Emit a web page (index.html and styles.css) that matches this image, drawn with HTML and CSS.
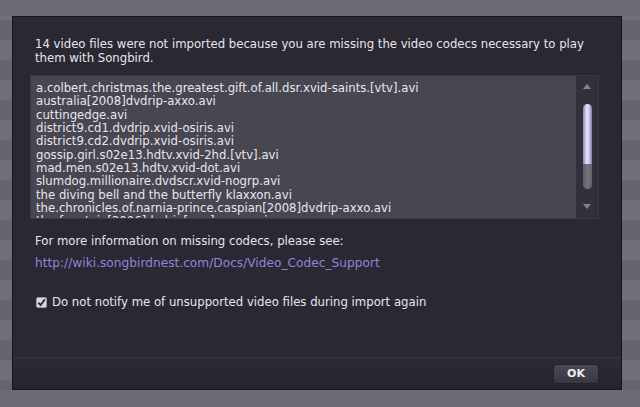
FILE: index.html
```html
<!DOCTYPE html>
<html>
<head>
<meta charset="utf-8">
<link rel="stylesheet" href="styles.css">
</head>
<body>
<div class="dialog">
  <div class="content">
    <p class="message">14 video files were not imported because you are missing the video codecs necessary to play them with Songbird.</p>
    <div class="listbox">
      <ul class="files">
        <li>a.colbert.christmas.the.greatest.gift.of.all.dsr.xvid-saints.[vtv].avi</li>
        <li>australia[2008]dvdrip-axxo.avi</li>
        <li>cuttingedge.avi</li>
        <li>district9.cd1.dvdrip.xvid-osiris.avi</li>
        <li>district9.cd2.dvdrip.xvid-osiris.avi</li>
        <li>gossip.girl.s02e13.hdtv.xvid-2hd.[vtv].avi</li>
        <li>mad.men.s02e13.hdtv.xvid-dot.avi</li>
        <li>slumdog.millionaire.dvdscr.xvid-nogrp.avi</li>
        <li>the diving bell and the butterfly klaxxon.avi</li>
        <li>the.chronicles.of.narnia-prince.caspian[2008]dvdrip-axxo.avi</li>
        <li>the.fountain[2006]dvdrip[eng]-axxo.avi</li>
      </ul>
      <div class="scrollbar">
        <span class="arrow up"></span>
        <div class="track">
          <div class="thumb"></div>
          <div class="thumb-rest"></div>
        </div>
        <span class="arrow down"></span>
      </div>
    </div>
    <p class="info">For more information on missing codecs, please see:</p>
    <a class="link" href="#">http://wiki.songbirdnest.com/Docs/Video_Codec_Support</a>
    <label class="check">
      <span class="box"><svg width="11" height="11" viewBox="0 0 11 11"><rect x="0.5" y="0.5" width="10" height="10" rx="1.5" fill="#d9d8de" stroke="#9a99a2"/><path d="M2.4 5.6 L4.6 8 L8.8 2.4" fill="none" stroke="#2a2833" stroke-width="1.8"/></svg></span>
      <span>Do not notify me of unsupported video files during import again</span>
    </label>
  </div>
  <div class="footer">
    <button class="ok">OK</button>
  </div>
</div>
</body>
</html>
```

FILE: styles.css
```css
html, body {
  margin: 0;
  height: 100%;
}
body {
  box-sizing: border-box;
  padding: 16px 18px 17px 12px;
  font-family: "DejaVu Sans", "Liberation Sans", sans-serif;
  background:
    linear-gradient(#6b6971, #6b6971) top / 100% 16px no-repeat,
    linear-gradient(#6b6971, #6b6971) bottom / 100% 17px no-repeat,
    repeating-linear-gradient(#706e76 0 20px, #66646c 20px 40px);
}
.dialog {
  height: 374px;
  box-sizing: border-box;
  border: 1px solid #16151b;
  background: #2a2833;
  display: flex;
  flex-direction: column;
  color: #e6e5eb;
}
.content {
  flex: 1;
  padding: 20px 22px 0 17px;
  display: flex;
  flex-direction: column;
}
.message {
  margin: 0 0 10px 5px;
  font-size: 11.7px;
  line-height: 14px;
}
.listbox {
  height: 144px;
  display: flex;
  background: #474651;
  border: 1px solid #3b3a45;
  box-sizing: border-box;
  overflow: hidden;
}
.files {
  flex: 1;
  list-style: none;
  margin: 0;
  padding: 6px 0 0 5px;
  font-size: 11.7px;
  line-height: 13.35px;
  color: #e8e7ed;
  white-space: nowrap;
  overflow: hidden;
}
.scrollbar {
  width: 22px;
  background: #32303b;
  display: flex;
  flex-direction: column;
  align-items: center;
  padding: 8px 0 9px;
  box-sizing: border-box;
}
.arrow {
  width: 0;
  height: 0;
  border-left: 4px solid transparent;
  border-right: 4px solid transparent;
}
.arrow.up { border-bottom: 5px solid #84838d; }
.arrow.down { border-top: 5px solid #84838d; }
.track {
  flex: 1;
  display: flex;
  flex-direction: column;
  padding: 15px 0 0;
}
.thumb {
  width: 9px;
  height: 60px;
  border-radius: 4.5px 4.5px 0 0;
  background: linear-gradient(90deg, #8a82b8, #ecebf6 45%, #b7b0dc 80%, #7d76a8);
}
.thumb-rest {
  width: 9px;
  height: 25px;
  border-radius: 0 0 4.5px 4.5px;
  background: linear-gradient(90deg, #5e5d66, #75747d 50%, #64636c);
}
.info {
  margin: 15px 0 0 5px;
  font-size: 11.7px;
  line-height: 14px;
}
.link {
  margin: 8px 0 0 5px;
  font-size: 12.2px;
  line-height: 14px;
  color: #8f85d8;
  text-decoration: none;
  align-self: flex-start;
}
.check {
  margin: 25px 0 0 6px;
  display: flex;
  align-items: center;
  gap: 5px;
  font-size: 11.7px;
  line-height: 14px;
}
.box { display: flex; }
.footer {
  height: 31px;
  border-top: 1px solid #383642;
  background: linear-gradient(#2d2b36, #25232d);
  display: flex;
  justify-content: flex-end;
  align-items: center;
  padding-right: 22px;
}
.ok {
  width: 46px;
  height: 20px;
  border: 1px solid #23222a;
  border-radius: 3px;
  background: linear-gradient(#4a4853, #393742);
  color: #f0f0f4;
  font-family: "DejaVu Sans", sans-serif;
  font-weight: bold;
  font-size: 11px;
  padding: 0;
}
```
